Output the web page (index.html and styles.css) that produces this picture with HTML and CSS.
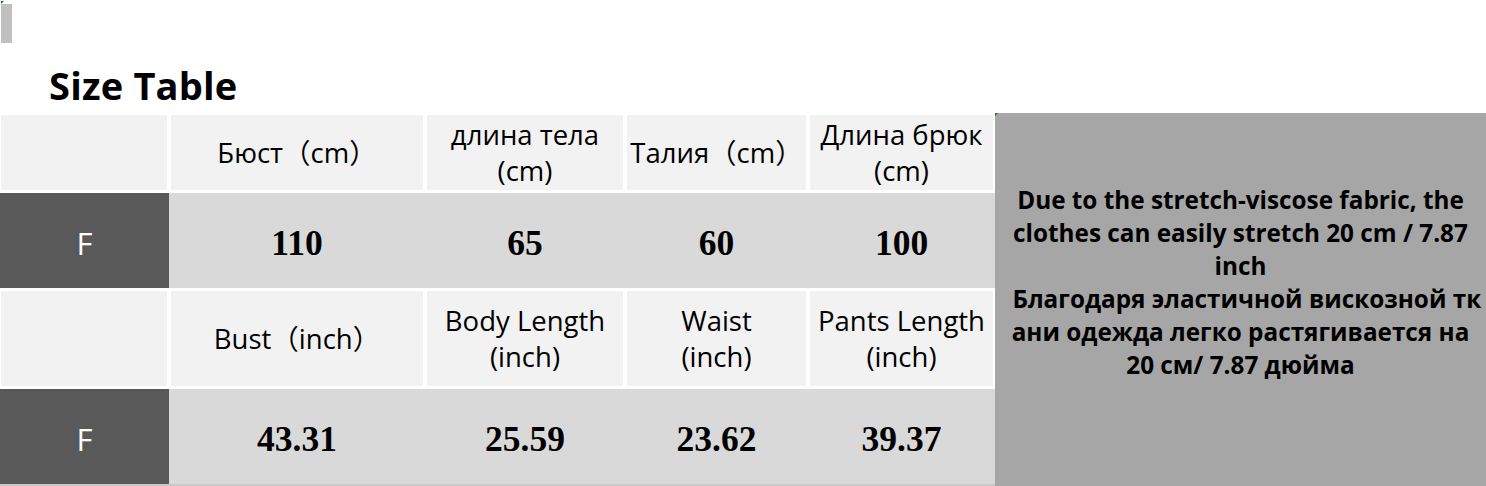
FILE: index.html
```html
<!DOCTYPE html>
<html>
<head>
<meta charset="utf-8">
<link rel="stylesheet" href="styles.css">
</head>
<body>
<div class="page">
  <div class="top">
    <div class="marker"></div>
    <h1 class="title">Size Table</h1>
  </div>
  <div class="main">
    <div class="table">
      <div class="row head first">
        <div class="cell c1"></div>
        <div class="cell c2">Бюст（cm）</div>
        <div class="cell c3">длина тела<br>(cm)</div>
        <div class="cell c4">Талия（cm）</div>
        <div class="cell c5">Длина брюк<br>(cm)</div>
      </div>
      <div class="row data">
        <div class="cell c1 size">F</div>
        <div class="cell c2">110</div>
        <div class="cell c3">65</div>
        <div class="cell c4">60</div>
        <div class="cell c5">100</div>
      </div>
      <div class="row head">
        <div class="cell c1"></div>
        <div class="cell c2">Bust（inch）</div>
        <div class="cell c3">Body Length<br>(inch)</div>
        <div class="cell c4">Waist<br>(inch)</div>
        <div class="cell c5">Pants Length<br>(inch)</div>
      </div>
      <div class="row data last">
        <div class="cell c1 size">F</div>
        <div class="cell c2">43.31</div>
        <div class="cell c3">25.59</div>
        <div class="cell c4">23.62</div>
        <div class="cell c5">39.37</div>
      </div>
    </div>
    <div class="note">
      <div class="note-text">Due to the stretch-viscose fabric, the<br>clothes can easily stretch 20 cm / 7.87<br>inch<br>&nbsp;&nbsp;Благодаря эластичной вискозной тк<br>ани одежда легко растягивается на<br>20 см/ 7.87 дюйма</div>
    </div>
  </div>
</div>
</body>
</html>
```
FILE: styles.css
```css
html, body {
  margin: 0;
  padding: 0;
  background: #ffffff;
}
.page {
  width: 1486px;
  height: 486px;
  overflow: hidden;
  font-family: "Open Sans", "Noto Sans CJK SC", sans-serif;
  color: #000;
}
.top {
  height: 113px;
  position: relative;
}
.marker {
  position: absolute;
  left: 1px;
  top: 4px;
  width: 11px;
  height: 39px;
  background: #c0c0c0;
}
.marker::before {
  content: "";
  position: absolute;
  left: 0;
  top: -3px;
  border-top: 3px solid #1a7a1a;
  border-right: 3px solid transparent;
}
.title {
  margin: 0;
  padding: 64px 0 0 49px;
  font-size: 38px;
  font-weight: 700;
  line-height: 42px;
  letter-spacing: 0.2px;
}
.main {
  display: flex;
  height: 373px;
}
.table {
  width: 995px;
  display: flex;
  flex-direction: column;
}
.row {
  display: flex;
}
.cell {
  box-sizing: border-box;
  display: flex;
  align-items: center;
  justify-content: center;
  text-align: center;
}
.c1 { width: 169px; }
.c2 { width: 256px; }
.c3 { width: 200px; }
.c4 { width: 183px; }
.c5 { width: 187px; }
.head .cell {
  background: #f2f2f2;
  border: 2px solid #ffffff;
  border-top-width: 3px;
  border-bottom-width: 3px;
  font-size: 27.5px;
  line-height: 36px;
  height: 101px;
  white-space: nowrap;
}
.head.first .cell {
  border-top-width: 2px;
  height: 80px;
}
.head .c1 { border-left-width: 1px; }
.data .cell {
  background: #d9d9d9;
  height: 95px;
  padding-top: 5px;
  font-family: "Liberation Serif", "Times New Roman", serif;
  font-weight: 700;
  font-size: 35.5px;
}
.data .size {
  background: #595959;
  color: #ffffff;
  font-family: "Open Sans", sans-serif;
  font-weight: 400;
  font-size: 31px;
}
.data.last {
  border-bottom: 2px solid #c8c8c8;
}
.note {
  flex: 1;
  background: #a6a6a6;
  display: flex;
  align-items: flex-start;
  justify-content: center;
  position: relative;
}
.note::before {
  content: "";
  position: absolute;
  left: 0;
  top: 0;
  border-top: 3px solid #1a7a1a;
  border-right: 3px solid transparent;
}
.note-text {
  margin-top: 70px;
  font-size: 24.3px;
  font-weight: 700;
  line-height: 33px;
  text-align: center;
  white-space: nowrap;
}
```
